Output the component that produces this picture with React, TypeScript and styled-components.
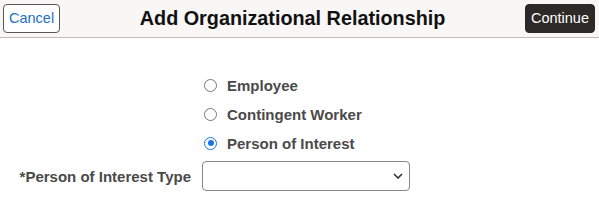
import styled, { createGlobalStyle } from 'styled-components';
import { useState } from 'react';

const GlobalStyle = createGlobalStyle`
  html, body {
    margin: 0;
    padding: 0;
    background: #ffffff;
    font-family: 'Liberation Sans', Arial, sans-serif;
  }
`;

const Header = styled.header`
  display: flex;
  align-items: center;
  justify-content: space-between;
  height: 37px;
  padding: 0 4px 0 3px;
  background: #f8f7f6;
  border-bottom: 1px solid #bebcb9;
`;

const Title = styled.h1`
  margin: 0;
  font-size: 19.8px;
  font-weight: 700;
  color: #111;
`;

const HeaderButton = styled.button<{ $primary?: boolean }>`
  height: 29px;
  margin-top: -1px;
  padding: 0 5px;
  border-radius: 4px;
  font-family: inherit;
  font-size: 14.5px;
  border: 1px solid ${(p) => (p.$primary ? '#2d2926' : '#5a5754')};
  background: ${(p) => (p.$primary ? '#2d2926' : '#ffffff')};
  color: ${(p) => (p.$primary ? '#ffffff' : '#1f6fc5')};
  cursor: pointer;
`;

const Body = styled.main`
  display: flex;
  flex-direction: column;
  padding-top: 38px;
`;

const RadioGroup = styled.div`
  display: flex;
  flex-direction: column;
  gap: 11px;
  padding-left: 204px;
`;

const RadioLabel = styled.label`
  display: flex;
  align-items: center;
  gap: 10px;
  height: 18px;
  font-size: 15px;
  font-weight: 700;
  color: #4a4a4a;
  cursor: pointer;
`;

const Circle = styled.span<{ $checked: boolean }>`
  box-sizing: border-box;
  width: 13px;
  height: 13px;
  border-radius: 50%;
  border: 1.5px solid ${(p) => (p.$checked ? '#1a73e8' : '#7a7775')};
  display: flex;
  align-items: center;
  justify-content: center;

  &::after {
    content: '';
    width: 6px;
    height: 6px;
    border-radius: 50%;
    background: ${(p) => (p.$checked ? '#1a73e8' : 'transparent')};
  }
`;

const FieldRow = styled.div`
  display: flex;
  align-items: center;
  gap: 11px;
  margin-top: 9px;
`;

const FieldLabel = styled.span`
  width: 191px;
  text-align: right;
  font-size: 15px;
  font-weight: 700;
  color: #4a4a4a;
`;

const Select = styled.div`
  box-sizing: border-box;
  width: 208px;
  height: 30px;
  border: 1px solid #8a8784;
  border-radius: 4px;
  display: flex;
  align-items: center;
  justify-content: flex-end;
  padding-right: 6px;
  color: #333;
`;

const options = ['Employee', 'Contingent Worker', 'Person of Interest'];

export default function App() {
  const [selected, setSelected] = useState('Person of Interest');

  return (
    <>
      <GlobalStyle />
      <Header>
        <HeaderButton>Cancel</HeaderButton>
        <Title>Add Organizational Relationship</Title>
        <HeaderButton $primary>Continue</HeaderButton>
      </Header>
      <Body>
        <RadioGroup>
          {options.map((o) => (
            <RadioLabel key={o} onClick={() => setSelected(o)}>
              <Circle $checked={selected === o} />
              {o}
            </RadioLabel>
          ))}
        </RadioGroup>
        <FieldRow>
          <FieldLabel>*Person of Interest Type</FieldLabel>
          <Select>
            <svg width="10" height="6" viewBox="0 0 10 6" fill="none">
              <path d="M1 1l4 4 4-4" stroke="#333" strokeWidth="1.6" />
            </svg>
          </Select>
        </FieldRow>
      </Body>
    </>
  );
}
